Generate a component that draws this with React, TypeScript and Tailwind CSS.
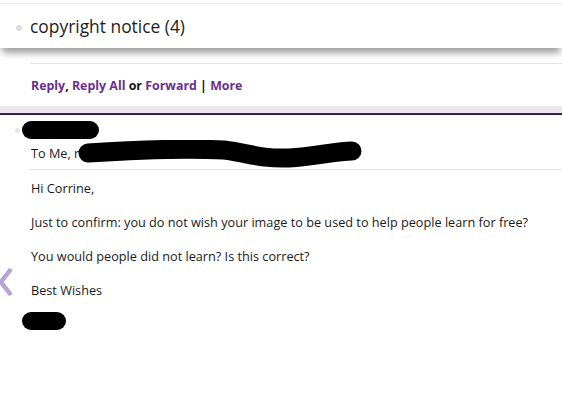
import React from 'react';

const Blob = ({ className }: { className: string }) => (
  <div className={`bg-black rounded-full ${className}`} />
);

const App = () => {
  const body = [
    'Hi Corrine,',
    'Just to confirm: you do not wish your image to be used to help people learn for free?',
    'You would people did not learn? Is this correct?',
    'Best Wishes',
  ];

  return (
    <div className="relative w-[562px] h-[405px] overflow-hidden bg-white text-[#222] font-['Open_Sans',sans-serif]">
      <div className="h-[3px]" />
      <div className="border-t border-[#e8e8e8]" />

      {/* conversation header card */}
      <div className="mt-[4px] h-[40px] flex items-center bg-white shadow-[0_7px_7px_-2px_rgba(0,0,0,0.38)] relative">
        <span className="ml-[16px] w-[6px] h-[6px] rounded-full bg-[#dedede]" />
        <span className="ml-[8px] text-[17.4px] leading-none text-[#1e1e1e] -mt-[2px]">copyright notice (4)</span>
      </div>

      <div className="mt-[15px] ml-[30px] border-t border-[#e4e4e4]" />

      <div className="mt-[14px] pl-[31px] text-[12.4px] font-bold leading-[16px] text-[#111]">
        <span className="text-[#6a2f8c]">Reply</span>, <span className="text-[#6a2f8c]">Reply All</span> or{' '}
        <span className="text-[#6a2f8c]">Forward</span> | <span className="text-[#6a2f8c]">More</span>
      </div>

      <div className="mt-[12px] h-[7px] bg-[#ece6f1]" />
      <div className="h-[2px] bg-[#3a1e4e]" />

      {/* sender */}
      <div className="relative mt-[6px] flex items-center">
        <span className="absolute left-[15px] top-[7px] w-[5px] h-[5px] rounded-full bg-[#e6e6e6]" />
        <Blob className="ml-[22px] w-[77px] h-[18px]" />
      </div>

      <div className="relative mt-[3px] pl-[31px] text-[12.7px] leading-[18px] h-[22px] flex items-center text-[#1a1a1a]">
        <span>To Me, r</span>
        <svg className="absolute left-[74px] top-[-2px]" width="292" height="32" viewBox="0 0 292 32">
          <path
            d="M14 13 C 60 10, 110 8, 150 10 C 175 13, 185 19, 215 18 C 240 17, 262 11, 278 11"
            stroke="#000"
            strokeWidth="19"
            strokeLinecap="round"
            fill="none"
          />
        </svg>
      </div>

      <div className="mt-[5px] ml-[30px] border-t border-[#e4e4e4]" />

      <div className="pl-[31px] pt-[9px] text-[12.7px] leading-[18px] text-[#1a1a1a] flex flex-col gap-[16px]">
        {body.map((line, i) => (
          <p key={i}>{line}</p>
        ))}
      </div>

      <Blob className="mt-[13px] ml-[22px] w-[44px] h-[18px]" />

      <svg className="absolute left-[-2px] top-[266px]" width="16" height="32" viewBox="0 0 16 32">
        <path d="M13 3 L3 16 L13 29" stroke="#b9a2d5" strokeWidth="4.5" fill="none" />
      </svg>
    </div>
  );
};

export default App;
